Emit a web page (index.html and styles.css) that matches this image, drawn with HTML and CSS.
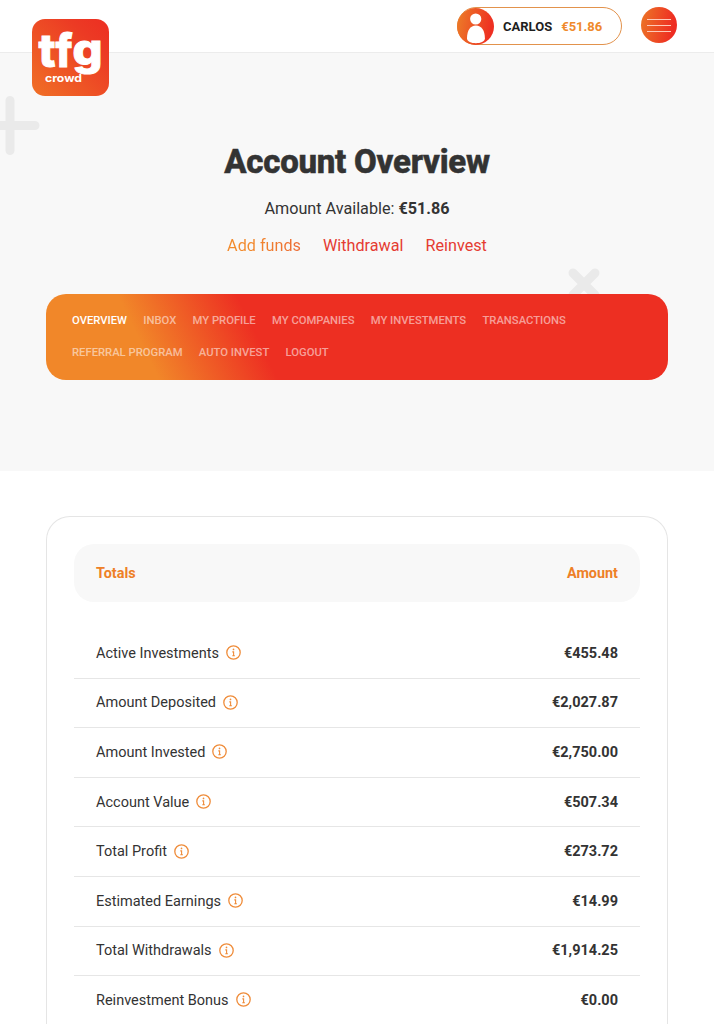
FILE: index.html
```html
<!DOCTYPE html>
<html lang="en">
<head>
    <meta charset="UTF-8">
    <meta name="viewport" content="width=device-width, initial-scale=1.0">
    <title>Account Overview</title>
    <link rel="stylesheet" href="styles.css">
</head>
<body>
    <header class="header">
        <a href="#" class="logo">
            <svg width="77" height="77" viewBox="0 0 77 77">
                <defs>
                    <linearGradient id="logo-bg" x1="0" y1="1" x2="1" y2="0">
                        <stop offset="0" stop-color="#f07026"/>
                        <stop offset="0.75" stop-color="#ec3a24"/>
                        <stop offset="1" stop-color="#ed2e22"/>
                    </linearGradient>
                </defs>
                <rect width="77" height="77" rx="13" fill="url(#logo-bg)"/>
                <g class="logo-main">
                    <text x="6.500" y="48" textLength="17" lengthAdjust="spacingAndGlyphs">t</text>
                    <text x="23.500" y="48" textLength="17" lengthAdjust="spacingAndGlyphs">f</text>
                    <text class="logo-g" x="40.500" y="46" textLength="30" lengthAdjust="spacingAndGlyphs">g</text>
                </g>
                <text class="logo-sub" x="13" y="62.5" textLength="37" lengthAdjust="spacingAndGlyphs">crowd</text>
            </svg>
        </a>
        <a href="#" class="user">
            <svg class="avatar" width="37" height="37" viewBox="0 0 37 37">
                <defs>
                    <linearGradient id="avatar-bg" x1="0" y1="0" x2="1" y2="0.2">
                        <stop offset="0" stop-color="#ec7f28"/>
                        <stop offset="1" stop-color="#ee2f22"/>
                    </linearGradient>
                </defs>
                <circle cx="18.5" cy="18.5" r="18.5" fill="url(#avatar-bg)"/>
                <circle cx="18.7" cy="11" r="5.6" fill="#fff"/>
                <path d="M10 30.5c0-8 3.300-13 8.900-13s9 5 9 13c0 3-4.500 4.700-9 4.700s-8.900-1.700-8.900-4.700z" fill="#fff"/>
            </svg>
            <span class="user-name">CARLOS</span>
            <span class="user-balance">€51.86</span>
        </a>
        <button class="menu-btn" aria-label="Menu">
            <span></span>
            <span></span>
            <span></span>
        </button>
    </header>

    <section class="hero">
        <svg class="shape shape-plus" width="40" height="60" viewBox="0 0 40 60">
            <path d="M10 4.500v50M-15 29.500h50"/>
        </svg>
        <svg class="shape shape-cross" width="32" height="32" viewBox="0 0 32 32">
            <path d="M5 5l22 22M27 5L5 27"/>
        </svg>
        <h1>Account Overview</h1>
        <p class="available">Amount Available: <strong>€51.86</strong></p>
        <div class="actions">
            <a href="#" class="add-funds">Add funds</a>
            <a href="#" class="withdrawal">Withdrawal</a>
            <a href="#" class="reinvest">Reinvest</a>
        </div>
        <nav class="account-nav">
            <a href="#" class="active">Overview</a>
            <a href="#">Inbox</a>
            <a href="#">My Profile</a>
            <a href="#">My Companies</a>
            <a href="#">My Investments</a>
            <a href="#">Transactions</a>
            <a href="#">Referral Program</a>
            <a href="#">Auto Invest</a>
            <a href="#">Logout</a>
        </nav>
    </section>

    <svg class="sprite" width="0" height="0">
        <symbol id="info" viewBox="0 0 15 15">
            <circle cx="7.500" cy="7.500" r="6.700" fill="none" stroke="currentColor" stroke-width="1.300"/>
            <path d="M6.300 6.900h1.300v3.700M6.300 10.700h2.600" fill="none" stroke="currentColor" stroke-width="1.100"/>
            <circle cx="7.500" cy="4.400" r="0.850" fill="currentColor"/>
        </symbol>
    </svg>

    <main class="card">
        <div class="totals-head">
            <span>Totals</span>
            <span>Amount</span>
        </div>
        <div class="totals">
            <div class="row">
                <span>Active Investments</span>
                <svg class="info"><use href="#info"/></svg>
                <strong>€455.48</strong>
            </div>
            <div class="row">
                <span>Amount Deposited</span>
                <svg class="info"><use href="#info"/></svg>
                <strong>€2,027.87</strong>
            </div>
            <div class="row">
                <span>Amount Invested</span>
                <svg class="info"><use href="#info"/></svg>
                <strong>€2,750.00</strong>
            </div>
            <div class="row">
                <span>Account Value</span>
                <svg class="info"><use href="#info"/></svg>
                <strong>€507.34</strong>
            </div>
            <div class="row">
                <span>Total Profit</span>
                <svg class="info"><use href="#info"/></svg>
                <strong>€273.72</strong>
            </div>
            <div class="row">
                <span>Estimated Earnings</span>
                <svg class="info"><use href="#info"/></svg>
                <strong>€14.99</strong>
            </div>
            <div class="row">
                <span>Total Withdrawals</span>
                <svg class="info"><use href="#info"/></svg>
                <strong>€1,914.25</strong>
            </div>
            <div class="row">
                <span>Reinvestment Bonus</span>
                <svg class="info"><use href="#info"/></svg>
                <strong>€0.00</strong>
            </div>
        </div>
    </main>
</body>
</html>
```
FILE: styles.css
```css
* {
    box-sizing: border-box;
}
body {
    display: flex;
    flex-direction: column;
    margin: 0;
    height: 1024px;
    overflow: hidden;
    font-family: Roboto, Arial, sans-serif;
    color: #333;
    background-color: #fff;
}
a {
    text-decoration: none;
    color: inherit;
}
.header {
    position: relative;
    z-index: 1;
    display: flex;
    flex-shrink: 0;
    justify-content: flex-end;
    gap: 19px;
    height: 53px;
    padding: 7px 37px 0 0;
    border-bottom: 1px solid #ececec;
    background-color: #fff;
}
.logo {
    position: absolute;
    left: 32px;
    top: 19px;
    height: 77px;
}
.logo-main {
    font-family: Inter, sans-serif;
    font-weight: 800;
    font-size: 46px;
    fill: #fff;
    stroke: #fff;
    stroke-width: 1px;
}
.logo-g {
    font-size: 43px;
}
.logo-sub {
    font-family: Inter, sans-serif;
    font-weight: 700;
    font-size: 11px;
    fill: #fff;
}
.user {
    display: flex;
    align-items: center;
    width: 165px;
    height: 38px;
    border: 1px solid #e2924c;
    border-radius: 19px;
    font-size: 13px;
    font-weight: 700;
}
.avatar {
    margin-left: -1px;
}
.user-name {
    margin-left: 9px;
    color: #1e1e1e;
}
.user-balance {
    margin-left: 9px;
    color: #ef8a2c;
}
.menu-btn {
    display: flex;
    flex-direction: column;
    justify-content: center;
    align-items: center;
    gap: 5px;
    width: 36px;
    height: 36px;
    padding: 0;
    border: none;
    border-radius: 50%;
    background: linear-gradient(100deg, #ec7727, #ee2c22 85%);
}
.menu-btn span {
    width: 24px;
    height: 1px;
    background-color: #ffc9b8;
}
.hero {
    position: relative;
    flex-shrink: 0;
    height: 418px;
    padding: 89px 46px 0;
    background-color: #f8f8f8;
    text-align: center;
}
.shape {
    position: absolute;
    fill: none;
    stroke: #eaeaea;
    stroke-width: 9px;
    stroke-linecap: round;
}
.shape-plus {
    left: 0;
    top: 43px;
}
.shape-cross {
    left: 568px;
    top: 215px;
}
h1 {
    margin: 0;
    font-size: 33px;
    line-height: 40px;
    font-weight: 800;
    letter-spacing: -0.25px;
    -webkit-text-stroke: 0.5px #333;
}
.available {
    margin: 17px 0 0;
    font-size: 16.2px;
    line-height: 20px;
}
.actions {
    display: flex;
    justify-content: center;
    gap: 22px;
    margin-top: 17px;
    font-size: 16.2px;
    line-height: 20px;
}
.actions a {
    color: #e53c32;
}
.actions .add-funds {
    color: transparent;
    background: linear-gradient(100deg, #f28a2b 30%, #ec6a35);
    background-clip: text;
    -webkit-background-clip: text;
}
.account-nav {
    position: relative;
    display: flex;
    flex-wrap: wrap;
    align-content: flex-start;
    column-gap: 16.3px;
    height: 86px;
    margin-top: 38px;
    padding: 11px 26px;
    border-radius: 20px;
    background: linear-gradient(64deg, #f18729 17%, #ed2f22 35%);
    font-size: 11.26px;
    font-weight: 500;
    line-height: 32.4px;
    text-transform: uppercase;
}
.account-nav a {
    color: rgba(255, 255, 255, 0.55);
}
.account-nav .active {
    color: #fff;
}
.sprite {
    position: absolute;
}
.card {
    flex: 1;
    min-height: 0;
    overflow: hidden;
    margin: 45px 46px 0;
    padding: 27px 27px 0;
    border: 1px solid #e5e5e5;
    border-bottom: none;
    border-radius: 24px 24px 0 0;
}
.totals-head {
    display: flex;
    justify-content: space-between;
    align-items: center;
    height: 58px;
    padding: 0 22px;
    border-radius: 20px;
    background-color: #f8f8f8;
    font-size: 14.4px;
    font-weight: 700;
    color: #ee8027;
}
.totals {
    margin-top: 27px;
}
.row {
    display: flex;
    align-items: center;
    height: 49.6px;
    padding: 0 22px;
    border-bottom: 1px solid #e6e6e6;
    font-size: 14.5px;
}
.row:last-child {
    height: 48px;
    border-bottom: none;
}
.row strong {
    margin-left: auto;
}
.info {
    width: 15px;
    height: 15px;
    margin-left: 7px;
    margin-bottom: 1px;
    color: #ef8c3a;
}
```
